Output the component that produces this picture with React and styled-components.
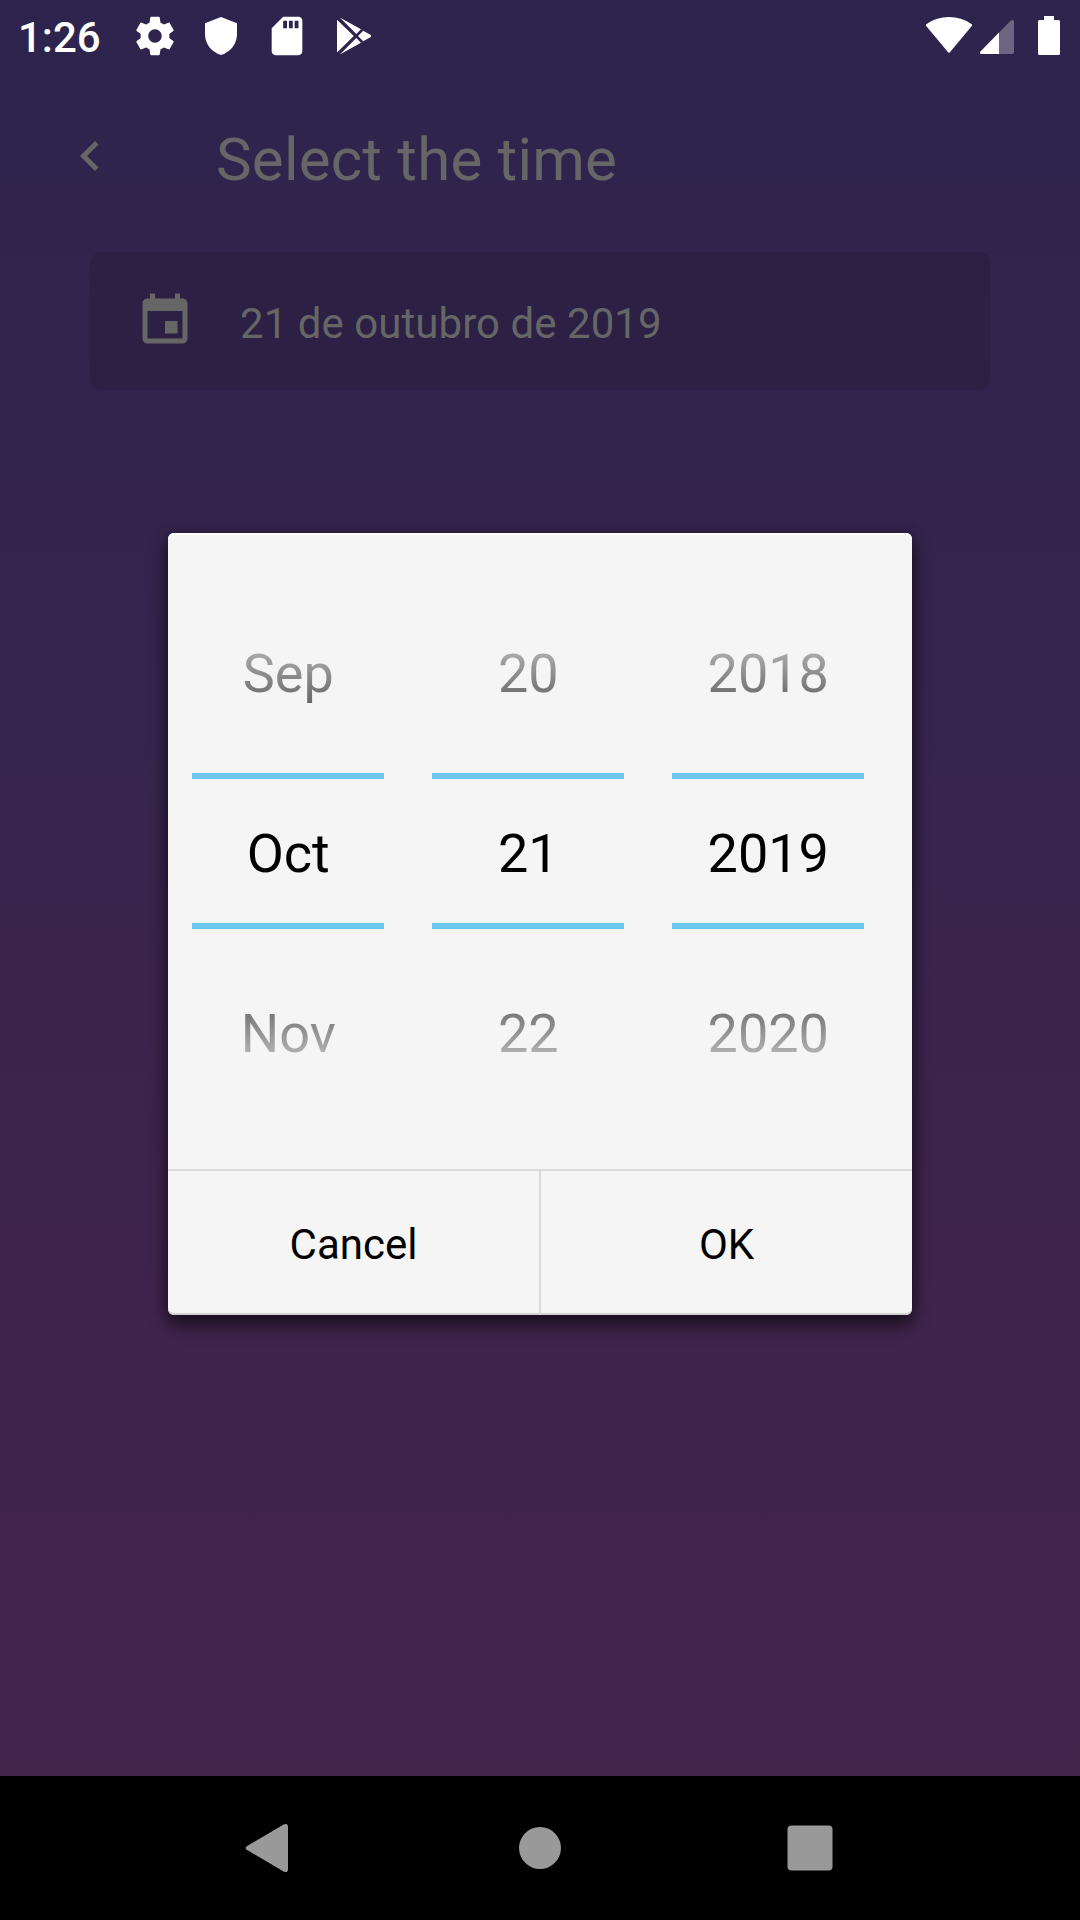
import React from "react";
import styled, { createGlobalStyle } from "styled-components";

const GlobalStyle = createGlobalStyle`
  * { box-sizing: border-box; }
  body {
    margin: 0;
    background: #000;
    font-family: Roboto, "Noto Sans", sans-serif;
  }
  svg { display: block; flex: none; }
`;

const Device = styled.div`
  width: 1080px;
  height: 1920px;
  display: flex;
  flex-direction: column;
  overflow: hidden;
`;

const Screen = styled.main`
  position: relative;
  height: 1776px;
  flex: none;
  background: linear-gradient(180deg, #2d244d 0%, #45244c 100%);
`;

const StatusBar = styled.header`
  height: 72px;
  display: flex;
  align-items: center;
  justify-content: space-between;
  padding: 0 20px 0 18px;
`;

const StatusGroup = styled.div`
  display: flex;
  align-items: center;
  gap: ${(p) => p.$gap}px;
`;

const BatterySlot = styled.div`
  display: flex;
  padding-left: 24px;
`;

const Clock = styled.span`
  width: 94px;
  padding-top: 4px;
  color: #fff;
  font-size: 42px;
  font-weight: 500;
  line-height: 50px;
  white-space: nowrap;
`;

const AppBar = styled.div`
  height: 168px;
  display: flex;
  align-items: center;
  padding: 0 60px;
`;

const BackButton = styled.button`
  display: flex;
  padding: 0;
  border: 0;
  margin: 0 96px 0 0;
  background: none;
  color: #666;
`;

const Title = styled.h1`
  margin: 7px 0 0;
  color: #666;
  font-size: 60px;
  font-weight: 400;
  line-height: 71px;
  letter-spacing: 0.22px;
  white-space: nowrap;
`;

const DateField = styled.div`
  height: 138px;
  margin: 12px 90px 0;
  padding: 0 45px;
  display: flex;
  align-items: center;
  gap: 45px;
  border-radius: 12px;
  background: rgba(0, 0, 0, 0.1);
  color: #666;
`;

const DateText = styled.span`
  padding-top: 5px;
  font-size: 42px;
  line-height: 50px;
  letter-spacing: 0.05px;
  white-space: nowrap;
`;

const Overlay = styled.div`
  position: absolute;
  inset: 0;
  display: flex;
  justify-content: center;
  align-items: flex-start;
  padding-top: 533px;
`;

const Dialog = styled.section`
  width: 744px;
  height: 782px;
  display: flex;
  flex-direction: column;
  border-radius: 6px;
  background: #f5f5f5;
  box-shadow:
    inset 0 2px 0 #fff,
    inset 0 -2px 0 #cfd1d0,
    0 10px 18px rgba(0, 0, 0, 0.6),
    0 0 14px rgba(0, 0, 0, 0.2);
`;

const Pickers = styled.div`
  height: 636px;
  display: flex;
  gap: 48px;
  padding: 48px 24px 0;
`;

const Wheel = styled.div`
  width: 192px;
  display: flex;
  flex-direction: column;
`;

const WheelItem = styled.div`
  height: ${(p) => (p.$selected ? 156 : 192)}px;
  display: flex;
  align-items: center;
  justify-content: center;
  padding-top: ${(p) => p.$top || 0}px;
  padding-bottom: ${(p) => p.$bottom || 0}px;
  padding-left: 0.5px;
  border: solid #6cc7ec;
  border-width: ${(p) => (p.$selected ? "6px 0" : "0")};
  font-size: 54px;
  line-height: 64px;
  color: #000;
  ${(p) =>
    p.$fade &&
    `
    color: transparent;
    background: ${p.$fade};
    background-clip: text;
    -webkit-background-clip: text;
  `}
`;

const Actions = styled.div`
  height: 146px;
  display: flex;
  border-top: 2px solid #dbdbdb;
`;

const Action = styled.button`
  flex: ${(p) => (p.$divided ? "0 0 373px" : "1")};
  padding: 4px 0 0;
  border: 0;
  border-right: ${(p) => (p.$divided ? "2px solid #dbdbdb" : "0")};
  background: none;
  color: #000;
  font-family: inherit;
  font-size: 42px;
  line-height: 50px;
`;

const NavBar = styled.nav`
  height: 144px;
  display: flex;
  align-items: center;
  justify-content: space-between;
  padding: 0 240px;
  background: #000;
  color: #999;
`;

const FADE_TOP =
  "linear-gradient(180deg, rgba(0,0,0,0) 17px, rgba(0,0,0,1) 197px)";
const FADE_BOTTOM =
  "linear-gradient(180deg, rgba(0,0,0,1) -5px, rgba(0,0,0,0) 175px)";

const WHEELS = [
  ["Sep", "Oct", "Nov"],
  ["20", "21", "22"],
  ["2018", "2019", "2020"],
];

const MaterialIcon = ({ size, d, color = "currentColor" }) => (
  <svg width={size} height={size} viewBox="0 0 24 24" fill={color}>
    <path d={d} />
  </svg>
);

const GEAR =
  "M19.43 12.98c.04-.32.07-.64.07-.98s-.03-.66-.07-.98l2.11-1.65c.19-.15.24-.42.12-.64l-2-3.46c-.12-.22-.39-.3-.61-.22l-2.49 1c-.52-.4-1.08-.73-1.69-.98l-.38-2.65C14.46 2.18 14.25 2 14 2h-4c-.25 0-.46.18-.49.42l-.38 2.65c-.61.25-1.17.59-1.69.98l-2.49-1c-.23-.09-.49 0-.61.22l-2 3.46c-.13.22-.07.49.12.64l2.11 1.65c-.04.32-.07.65-.07.98s.03.66.07.98l-2.11 1.65c-.19.15-.24.42-.12.64l2 3.46c.12.22.39.3.61.22l2.49-1c.52.4 1.08.73 1.69.98l.38 2.65c.03.24.24.42.49.42h4c.25 0 .46-.18.49-.42l.38-2.65c.61-.25 1.17-.59 1.69-.98l2.49 1c.23.09.49 0 .61-.22l2-3.46c.12-.22.07-.49-.12-.64l-2.11-1.65zM12 15.5c-1.93 0-3.5-1.57-3.5-3.5s1.57-3.5 3.5-3.5 3.5 1.57 3.5 3.5-1.57 3.5-3.5 3.5z";
const SD =
  "M18 2h-8L4.02 8 4 20c0 1.1.9 2 2 2h12c1.1 0 2-.9 2-2V4c0-1.1-.9-2-2-2zm-6 6h-2V4h2v4zm3 0h-2V4h2v4zm3 0h-2V4h2v4z";
const CHEVRON = "M15.41 7.41L14 6l-6 6 6 6 1.41-1.41L10.83 12z";
const EVENT =
  "M17 12h-5v5h5v-5zM16 1v2H8V1H6v2H5c-1.11 0-1.99.9-1.99 2L3 19c0 1.1.89 2 2 2h14c1.1 0 2-.9 2-2V5c0-1.1-.9-2-2-2h-1V1h-2zm3 18H5V8h14v11z";

const ShieldIcon = () => (
  <svg width="46" height="46" viewBox="0 0 46 46" fill="#fff">
    <path d="M23 4L39 10.3V21C39 31 32.5 39 23 42C13.500 39 7 31 7 21V10.300Z" />
  </svg>
);

const PlayIcon = () => (
  <svg width="46" height="46" viewBox="330 13 46 46" fill="#fff">
    <path d="M337 19.700L353.800 36L337 52.400Z" />
    <path d="M339.800 17.500L361 29.200L356.300 34Z" />
    <path d="M339.800 54.500L361 42.800L356.300 38Z" />
    <path d="M363.200 30.800L370.400 34.800Q372 36 370.400 37.200L363.200 41.200L358 36Z" />
  </svg>
);

const WifiIcon = () => (
  <svg width="46" height="40" viewBox="926 16 46 40" fill="#fff">
    <path d="M926.400 26.300Q925.200 24.900 926.700 23.900Q936.500 17 949 17Q961.500 17 971.300 23.900Q972.800 24.900 971.600 26.300L949.900 52.300Q949 53.300 948.100 52.300Z" />
  </svg>
);

const SignalIcon = () => (
  <svg width="34" height="40" viewBox="980 16 34 40">
    <path
      d="M980.800 51.300L1010.600 20.700Q1011.500 19.800 1012.600 20Q1014 20.300 1014 21.800V52Q1014 54 1012 54H981.500Q979 53.700 980.800 51.300Z"
      fill="rgba(255,255,255,0.3)"
    />
    <path
      d="M980.800 51.300L999 32.600V54H981.500Q979 53.700 980.800 51.300Z"
      fill="#fff"
    />
  </svg>
);

const BatteryIcon = () => (
  <svg width="22" height="40" viewBox="1038 16 22 40" fill="#fff">
    <path d="M1044 16H1054V20H1058.500Q1060 20 1060 21.500V53.500Q1060 55 1058.500 55H1039.500Q1038 55 1038 53.500V21.500Q1038 20 1039.500 20H1044Z" />
  </svg>
);

const BackIcon = () => (
  <svg width="60" height="60" viewBox="240 1818 60 60" fill="currentColor">
    <path d="M246.400 1846.400L283.600 1824.500Q288 1822.500 288 1827V1869Q288 1873.500 283.600 1871.500L246.400 1849.600Q244.800 1848 246.400 1846.400Z" />
  </svg>
);

const HomeIcon = () => (
  <svg width="60" height="60" viewBox="0 0 60 60" fill="currentColor">
    <circle cx="30" cy="30" r="21" />
  </svg>
);

const RecentsIcon = () => (
  <svg width="60" height="60" viewBox="0 0 60 60" fill="currentColor">
    <rect x="7.500" y="7.500" width="45" height="45" rx="4" />
  </svg>
);

export default function App() {
  return (
    <>
      <GlobalStyle />
      <Device>
        <Screen>
          <StatusBar>
            <StatusGroup $gap={20}>
              <Clock>1:26</Clock>
              <MaterialIcon size={46} d={GEAR} color="#fff" />
              <ShieldIcon />
              <MaterialIcon size={46} d={SD} color="#fff" />
              <PlayIcon />
            </StatusGroup>
            <StatusGroup $gap={0}>
              <StatusGroup $gap={8}>
                <WifiIcon />
                <SignalIcon />
              </StatusGroup>
              <BatterySlot>
                <BatteryIcon />
              </BatterySlot>
            </StatusGroup>
          </StatusBar>

          <AppBar>
            <BackButton aria-label="Back">
              <MaterialIcon size={60} d={CHEVRON} />
            </BackButton>
            <Title>Select the time</Title>
          </AppBar>

          <DateField>
            <MaterialIcon size={60} d={EVENT} />
            <DateText>21 de outubro de 2019</DateText>
          </DateField>

          <Overlay>
            <Dialog role="dialog">
              <Pickers>
                {WHEELS.map(([previous, current, next]) => (
                  <Wheel key={current}>
                    <WheelItem $bottom={6} $fade={FADE_TOP}>
                      {previous}
                    </WheelItem>
                    <WheelItem $selected $top={5}>
                      {current}
                    </WheelItem>
                    <WheelItem $top={17} $fade={FADE_BOTTOM}>
                      {next}
                    </WheelItem>
                  </Wheel>
                ))}
              </Pickers>
              <Actions>
                <Action $divided>Cancel</Action>
                <Action>OK</Action>
              </Actions>
            </Dialog>
          </Overlay>
        </Screen>

        <NavBar>
          <BackIcon />
          <HomeIcon />
          <RecentsIcon />
        </NavBar>
      </Device>
    </>
  );
}
